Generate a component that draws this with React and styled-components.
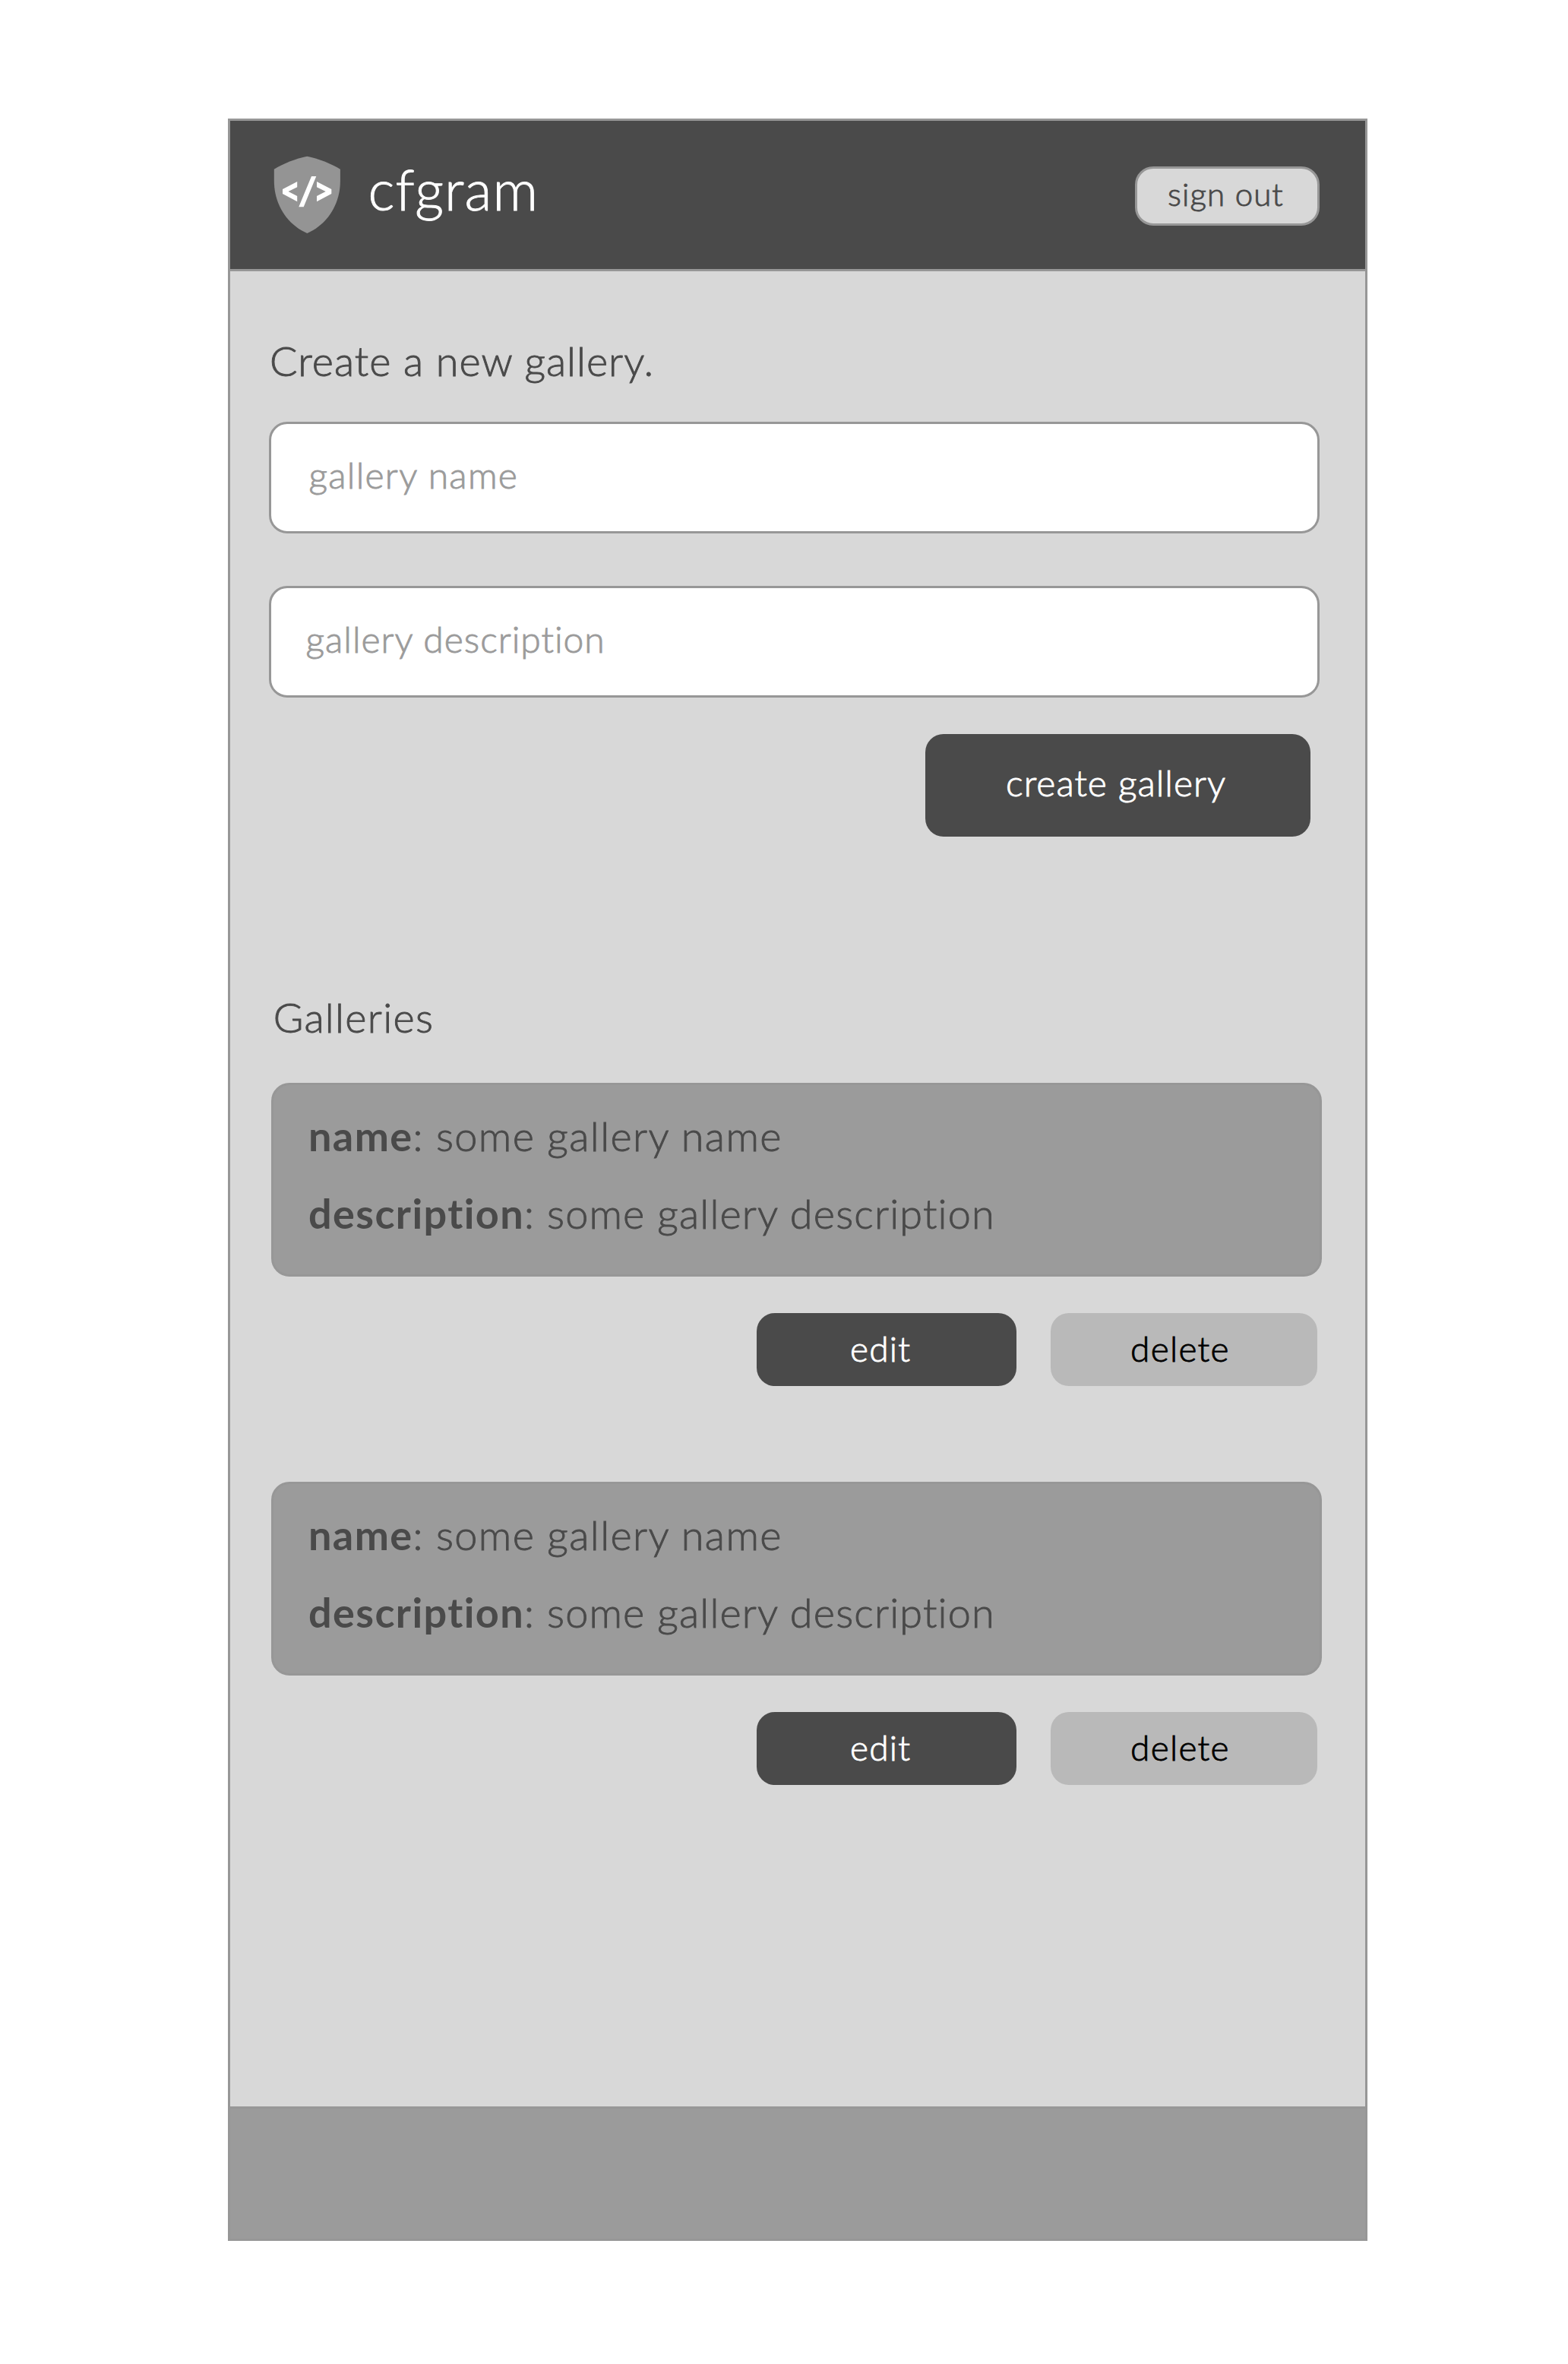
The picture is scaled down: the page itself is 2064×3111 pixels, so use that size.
import React from "react";
import styled, { createGlobalStyle } from "styled-components";

const color = {
  dark: "#4a4a4a",
  line: "#979797",
  panel: "#9b9b9b",
  muted: "#b9b9b9",
  surface: "#d8d8d8",
  white: "#ffffff",
};

const GlobalStyle = createGlobalStyle`
  *, *::before, *::after { box-sizing: border-box; }
  body {
    margin: 0;
    background: ${color.white};
    color: ${color.dark};
    font-family: Lato, "Open Sans", sans-serif;
    font-weight: 300;
    font-variant-ligatures: none;
    -webkit-text-stroke: 0.9px currentColor;
  }
`;

const Page = styled.div`
  display: flex;
  width: 2064px;
  height: 3111px;
  padding: 156px 264px 162px 300px;
`;

const Screen = styled.div`
  display: flex;
  flex-direction: column;
  width: 1500px;
  border: 3px solid ${color.line};
  background: ${color.surface};
`;

const Header = styled.header`
  display: flex;
  justify-content: space-between;
  align-items: flex-start;
  height: 198px;
  padding: 0 60px 0 57px;
  border-bottom: 3px solid ${color.line};
  background: ${color.dark};
`;

const Brand = styled.div`
  display: flex;
  align-items: flex-start;
  gap: 35.5px;
  padding-top: 46px;
`;

const Logo = styled.svg`
  display: block;
  width: 89px;
  height: 103px;
`;

const BrandName = styled.h1`
  margin: 8px 0 0;
  color: ${color.white};
  font-size: 74px;
  font-weight: 300;
  line-height: 72px;
  letter-spacing: 1.1px;
`;

const Button = styled.button`
  display: flex;
  align-items: center;
  border: 0;
  border-radius: 24px;
  font-family: inherit;
  font-weight: 300;
  white-space: nowrap;
  -webkit-text-stroke: 0.9px currentColor;
`;

const SignOut = styled(Button)`
  width: 243px;
  height: 78px;
  margin-top: 60px;
  padding: 0 0 6px 40px;
  border: 3px solid ${color.line};
  background: ${color.surface};
  color: ${color.dark};
  font-size: 42px;
  letter-spacing: 1.1px;
`;

const Main = styled.main`
  display: flex;
  flex: 1;
  flex-direction: column;
  padding: 88px 60px 0 51px;
`;

const Heading = styled.h2`
  margin: 0;
  padding-left: ${(p) => p.$indent}px;
  font-size: 54px;
  font-weight: 300;
  line-height: 60px;
  letter-spacing: ${(p) => p.$spacing}px;
`;

const Form = styled.form`
  display: flex;
  flex-direction: column;
  margin-top: 50px;
`;

const Fields = styled.div`
  display: flex;
  flex-direction: column;
  gap: 69px;
`;

const Field = styled.div`
  display: flex;
  align-items: center;
  height: 147px;
  padding: 0 48px 9px ${(p) => p.$indent}px;
  border: 3px solid ${color.line};
  border-radius: 24px;
  background: ${color.white};
  color: ${color.panel};
  font-size: 48px;
  letter-spacing: ${(p) => p.$spacing}px;
`;

const CreateButton = styled(Button)`
  align-self: flex-end;
  width: 507px;
  height: 135px;
  margin: 48px 12px 0 0;
  padding: 0 0 8px 106px;
  background: ${color.dark};
  color: ${color.white};
  font-size: 48px;
  letter-spacing: 1.03px;
`;

const Galleries = styled.section`
  margin-top: 208px;
`;

const List = styled.div`
  display: flex;
  flex-direction: column;
  gap: 126px;
  margin: 56px -3px 0 3px;
`;

const Item = styled.article`
  display: flex;
  flex-direction: column;
  gap: 48px;
`;

const Card = styled.div`
  display: flex;
  flex-direction: column;
  gap: 42px;
  height: 255px;
  padding: 37px 46px 35px;
  border: 3px solid ${color.line};
  border-radius: 24px;
  background: ${color.panel};
`;

const Line = styled.div`
  font-size: 54px;
  line-height: 60px;
  letter-spacing: ${(p) => p.$spacing}px;
  white-space: nowrap;
`;

const Label = styled.strong`
  font-weight: 700;
  letter-spacing: 1.4px;
  -webkit-text-stroke: 0;
`;

const Actions = styled.div`
  display: flex;
  justify-content: flex-end;
  gap: 45px;
  padding-right: 6px;
`;

const ActionButton = styled(Button)`
  width: ${(p) => (p.$secondary ? 351 : 342)}px;
  height: 96px;
  padding: 0 0 4px ${(p) => (p.$secondary ? 105 : 123)}px;
  background: ${(p) => (p.$secondary ? color.muted : color.dark)};
  color: ${(p) => (p.$secondary ? "#000" : color.white)};
  font-size: 46px;
  letter-spacing: ${(p) => (p.$secondary ? 1.3 : 1.2)}px;
`;

const Footer = styled.footer`
  height: 174px;
  border-top: 3px solid ${color.line};
  background: ${color.panel};
`;

const galleries = [
  { id: 1, name: "some gallery name", description: "some gallery description" },
  { id: 2, name: "some gallery name", description: "some gallery description" },
];

function ShieldLogo() {
  return (
    <Logo viewBox="360 205 89 103" aria-hidden="true">
      <path
        d="M404.3 205.7C390 208.5 372 215.5 360.8 222.7V238C360.8 269 378 295.5 404.3 307C430.6 295.5 447.9 269 447.9 238V222.7C436.5 215.5 418.5 208.5 404.3 205.7Z"
        fill="#949494"
      />
      <path
        d="M391.2 239V246.3L379.5 252L391.2 258V265.3L372 255V249ZM410 232H416.3L399.7 272.2H393.3ZM417 239L436.3 249V255L417 265.3V258L428.7 252L417 246.3Z"
        fill="#fff"
      />
    </Logo>
  );
}

export default function App() {
  return (
    <>
      <GlobalStyle />
      <Page>
        <Screen>
          <Header>
            <Brand>
              <ShieldLogo />
              <BrandName>cfgram</BrandName>
            </Brand>
            <SignOut type="button">sign out</SignOut>
          </Header>
          <Main>
            <Heading $indent={1} $spacing={1}>Create a new gallery.</Heading>
            <Form>
              <Fields>
                <Field $indent={49.4} $spacing={1.3}>gallery name</Field>
                <Field $indent={45.6} $spacing={0.98}>gallery description</Field>
              </Fields>
              <CreateButton type="button">create gallery</CreateButton>
            </Form>
            <Galleries>
              <Heading $indent={5.7} $spacing={1.3}>Galleries</Heading>
              <List>
                {galleries.map((g) => (
                  <Item key={g.id}>
                    <Card>
                      <Line $spacing={1.4}><Label>name</Label>: {g.name}</Line>
                      <Line $spacing={1.17}><Label>description</Label>: {g.description}</Line>
                    </Card>
                    <Actions>
                      <ActionButton type="button">edit</ActionButton>
                      <ActionButton type="button" $secondary>delete</ActionButton>
                    </Actions>
                  </Item>
                ))}
              </List>
            </Galleries>
          </Main>
          <Footer />
        </Screen>
      </Page>
    </>
  );
}
